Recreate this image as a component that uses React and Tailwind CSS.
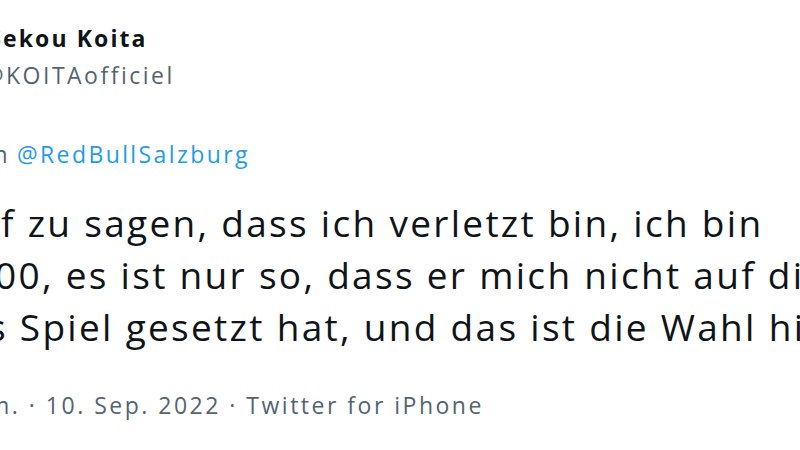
import React from "react";

function Row({ prefix, children, className = "", shift = "" }) {
  return (
    <div className={"flex whitespace-nowrap " + className}>
      <span className="flex w-0 shrink-0 justify-end">{prefix}</span>
      <span className={shift}>{children}</span>
    </div>
  );
}

export default function App() {
  return (
    <div
      className="h-[450px] w-[800px] overflow-hidden bg-white pt-[25px] text-[#0f1419]"
      style={{ fontFamily: '"Open Sans", "Noto Sans", sans-serif' }}
    >
      <Row prefix="S" className="pl-[3px] text-[23px] font-bold leading-[26px] tracking-[2.1px]">
        ekou Koita
      </Row>
      <Row prefix="@" className="mt-[11px] pl-[6px] text-[23px] leading-[26px] tracking-[2.5px] text-[#536471]">
        KOITAofficiel
      </Row>
      <Row
        prefix="Antwort an"
        className="mt-[53px] pl-[10px] text-[23px] leading-[26px] tracking-[2.4px] text-[#536471]"
        shift="ml-[7px] text-[#1d9bf0]"
      >
        @RedBullSalzburg
      </Row>
      <div className="mt-[30px] text-[37px] leading-[52px] tracking-[2.3px]">
        <Row prefix="Ich bin es leid, darau" className="pl-[1px]">
          f zu sagen, dass ich verletzt bin, ich bin
        </Row>
        <Row prefix="zu 1" shift="-ml-[5px]">
          00, es ist nur so, dass er mich nicht auf die Liste
        </Row>
        <Row prefix="diese" shift="-ml-[12px]">
          s Spiel gesetzt hat, und das ist die Wahl hier.
        </Row>
      </div>
      <Row
        prefix="4:37 nach"
        className="mt-[39px] text-[23px] leading-[26px] tracking-[2.5px] text-[#536471]"
        shift="-ml-[12px]"
      >
        m. · 10. Sep. 2022 · Twitter for iPhone
      </Row>
    </div>
  );
}
